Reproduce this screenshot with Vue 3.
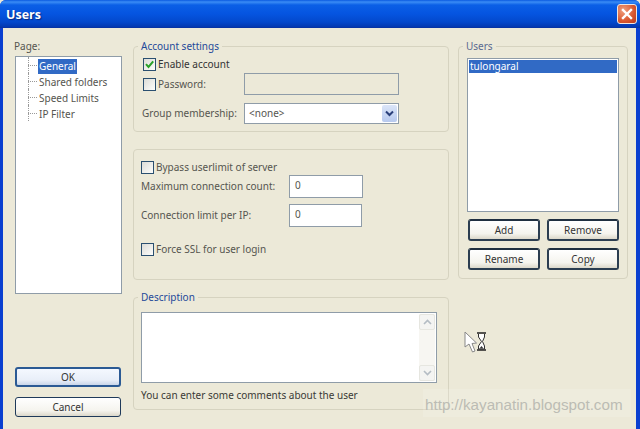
<script setup>
const pages = ['General', 'Shared folders', 'Speed Limits', 'IP Filter']
</script>

<template>
  <div class="window">
    <header class="titlebar">
      <span class="title">Users</span>
      <button class="close" aria-label="Close">
        <svg width="12" height="12" viewBox="0 0 12 12"><path d="M2 2 L10 10 M10 2 L2 10" stroke="#fff" stroke-width="2.4" stroke-linecap="square" fill="none"/></svg>
      </button>
    </header>
    <main class="client">
      <section class="col-page">
        <div class="page-label">Page:</div>
        <ul class="tree">
          <li v-for="(p, i) in pages" :key="p" class="node">
            <span class="node-text" :class="{ active: i === 0 }">{{ p }}</span>
          </li>
        </ul>
        <button class="btn default">OK</button>
        <button class="btn cancel">Cancel</button>
      </section>

      <section class="col-main">
        <fieldset class="group account">
          <legend>Account settings</legend>
          <label class="check-row first">
            <span class="check">
              <svg width="11" height="11" viewBox="0 0 11 11"><path d="M2 5.2 L4.5 8 L9.2 2.4" stroke="#2aa12a" stroke-width="2" fill="none"/></svg>
            </span>
            <span class="dark">Enable account</span>
          </label>
          <div class="row pw">
            <label class="check-row pw-label"><span class="check"></span><span>Password:</span></label>
            <div class="input disabled"></div>
          </div>
          <div class="row gm">
            <span class="gm-label">Group membership:</span>
            <div class="select">
              <span class="select-value">&lt;none&gt;</span>
              <span class="select-arrow">
                <svg width="9" height="7" viewBox="0 0 9 7"><path d="M1 1.5 L4.5 5 L8 1.5" stroke="#2a3f7a" stroke-width="2" fill="none"/></svg>
              </span>
            </div>
          </div>
        </fieldset>

        <fieldset class="group limits">
          <label class="check-row"><span class="check"></span><span>Bypass userlimit of server</span></label>
          <div class="row max">
            <span class="limit-label">Maximum connection count:</span>
            <div class="input num">0</div>
          </div>
          <div class="row ip">
            <span class="limit-label">Connection limit per IP:</span>
            <div class="input num narrow">0</div>
          </div>
          <label class="check-row ssl"><span class="check"></span><span>Force SSL for user login</span></label>
        </fieldset>

        <fieldset class="group desc">
          <legend>Description</legend>
          <div class="textarea">
            <div class="scrollbar">
              <span class="sb-btn"><svg width="9" height="6" viewBox="0 0 9 6"><path d="M1 5 L4.5 1.5 L8 5" stroke="#b4bcc4" stroke-width="1.6" fill="none"/></svg></span>
              <span class="sb-btn"><svg width="9" height="6" viewBox="0 0 9 6"><path d="M1 1 L4.5 4.5 L8 1" stroke="#b4bcc4" stroke-width="1.6" fill="none"/></svg></span>
            </div>
          </div>
          <p class="hint">You can enter some comments about the user</p>
        </fieldset>
      </section>

      <section class="col-users">
        <fieldset class="group users">
          <legend class="muted">Users</legend>
          <div class="listbox"><div class="list-item">tulongaral</div></div>
          <div class="user-buttons">
            <button class="btn dark-edge">Add</button>
            <button class="btn dark-edge">Remove</button>
            <button class="btn dark-edge">Rename</button>
            <button class="btn dark-edge">Copy</button>
          </div>
        </fieldset>
      </section>
    </main>

    <svg class="cursor" width="24" height="24" viewBox="0 0 24 24">
      <path d="M1 1 L1 16 L5 13 L8.5 21 L11 20 L8 12.5 L12.5 12 Z" fill="#fff" stroke="#888" stroke-width="1"/>
      <path d="M13 2 H22 M13 19 H22" stroke="#222" stroke-width="1.6" fill="none"/>
      <path d="M14.5 3 V6 L17.5 10.5 L14.5 15 V18 H20.5 V15 L18.5 10.5 L20.5 6 V3" fill="#fff" stroke="#333" stroke-width="1"/>
      <path d="M15.5 17.5 L17.5 15 L19.5 17.5 Z" fill="#333"/>
    </svg>
    <div class="watermark">http://kayanatin.blogspot.com</div>
  </div>
</template>

<style scoped>
.window {
  position: relative;
  width: 640px;
  height: 429px;
  overflow: hidden;
  display: flex;
  flex-direction: column;
  background: #0a3fd0;
  border-radius: 6px 6px 0 0;
  font-family: "Noto Sans", "Open Sans", sans-serif;
  font-size: 10px;
  line-height: 13px;
  color: #55554f;
}
.titlebar {
  height: 28px;
  flex: none;
  display: flex;
  align-items: center;
  justify-content: space-between;
  padding: 0 3px 0 6px;
  box-sizing: border-box;
  background: linear-gradient(180deg, #0a5ae0 0, #3a8cf5 2px, #0a5fe6 5px, #0554e0 14px, #0348cc 22px, #0338b0 27px, #0a2f9a 28px);
}
.title {
  color: #fff;
  font-family: "Open Sans", sans-serif;
  font-weight: 700;
  font-size: 12.5px;
  text-shadow: 1px 1px 1px #0a2a80;
}
.close {
  width: 20px;
  height: 20px;
  padding: 0;
  display: flex;
  align-items: center;
  justify-content: center;
  border: 1px solid #f0e6e0;
  border-radius: 3px;
  background: radial-gradient(circle at 30% 30%, #f0a080, #d9562e 60%, #b83a1c);
}
.client {
  flex: 1;
  margin: 0 4px 0 3px;
  background: #ece9d8;
  display: grid;
  grid-template-columns: 109px 316px 170px;
  grid-template-areas: "a b c";
  column-gap: 0;
  padding: 12px 0 0 11px;
  box-sizing: border-box;
  align-items: start;
}
.col-page, .col-main, .col-users {
  display: flex;
  flex-direction: column;
}
.col-main {
  margin-left: 10px;
  width: 316px;
}
.col-users {
  margin-left: 19px;
  width: 170px;
}
.page-label {
  height: 16px;
}
.tree {
  list-style: none;
  margin: 0 0 0 1px;
  padding: 1px 0 0 22px;
  width: 107px;
  height: 238px;
  box-sizing: border-box;
  background: #fff;
  border: 1px solid #8f9ca8;
}
.node {
  position: relative;
  height: 16px;
  display: flex;
  align-items: center;
}
.node::before {
  content: "";
  position: absolute;
  left: -10px;
  top: 7px;
  width: 9px;
  border-top: 1px dotted #999;
}
.node::after {
  content: "";
  position: absolute;
  left: -10px;
  top: -1px;
  height: 16px;
  border-left: 1px dotted #999;
}
.node-text {
  padding: 1px;
}
.node-text.active {
  background: #316ac5;
  color: #fff;
}
.btn {
  font: inherit;
  padding: 0;
  color: #333;
  border-radius: 3px;
  background: linear-gradient(180deg, #ffffff, #f5f4ee 70%, #dcd8ca);
  border: 1px solid #1f3a5a;
}
.btn.default {
  width: 106px;
  height: 20px;
  margin: 73px 0 0 1px;
  border: 2px solid #2b5a94;
  background: linear-gradient(180deg, #f4f8ff, #e8eef8 70%, #c9d6ea);
}
.btn.cancel {
  width: 106px;
  height: 20px;
  margin: 10px 0 0 1px;
}
.group {
  margin: 0;
  min-width: 0;
  box-sizing: border-box;
  border: 1px solid #d6d3c0;
  border-radius: 4px;
  padding: 0 7px;
}
legend {
  padding: 0 3px;
  margin-left: -3px;
  color: #1f4a9a;
  line-height: 13px;
}
legend.muted {
  color: #5a6a90;
}
.account {
  height: 92px;
  padding-top: 5px;
}
.limits {
  height: 131px;
  margin-top: 17px;
  padding-top: 11px;
}
.desc {
  height: 119px;
  margin-top: 11px;
  padding-top: 8px;
}
.users {
  height: 239px;
  padding-top: 5px;
}
.check-row {
  display: flex;
  align-items: center;
  gap: 2px;
  height: 13px;
}
.check-row.first {
  margin-left: 2px;
}
.dark {
  color: #333;
}
.check {
  width: 13px;
  height: 13px;
  flex: none;
  box-sizing: border-box;
  border: 1px solid #2a4f70;
  background: linear-gradient(135deg, #dcdcd7, #fdfdfb);
  display: flex;
  align-items: center;
  justify-content: center;
}
.row {
  display: flex;
  align-items: center;
}
.pw {
  margin-top: 2px;
  height: 22px;
}
.pw-label {
  width: 101px;
  margin-left: 2px;
  flex: none;
}
.gm {
  margin-top: 8px;
  height: 21px;
}
.gm-label {
  width: 102px;
  margin-left: 1px;
  flex: none;
}
.input {
  box-sizing: border-box;
  border: 1px solid #8f9ca8;
  background: #fff;
}
.input.disabled {
  width: 155px;
  height: 22px;
  background: #ece9d8;
}
.select {
  width: 155px;
  height: 21px;
  box-sizing: border-box;
  border: 1px solid #8f9ca8;
  background: #fff;
  display: flex;
  align-items: center;
  justify-content: space-between;
  padding-left: 4px;
}
.select-arrow {
  width: 15px;
  height: 17px;
  margin-right: 1px;
  background: linear-gradient(180deg, #dbe5f8, #b7c9ee);
  border-radius: 2px;
  display: flex;
  align-items: center;
  justify-content: center;
}
.max {
  margin-top: 1px;
  height: 23px;
}
.ip {
  margin-top: 6px;
  height: 23px;
}
.limit-label {
  width: 148px;
  flex: none;
}
.num {
  width: 74px;
  height: 23px;
  padding: 3px 0 0 5px;
}
.num.narrow {
  width: 73px;
}
.ssl {
  margin-top: 16px;
}
.textarea {
  width: 296px;
  height: 71px;
  box-sizing: border-box;
  border: 1px solid #8f9ca8;
  background: #fff;
  display: flex;
  justify-content: flex-end;
  padding: 1px;
}
.scrollbar {
  width: 16px;
  display: flex;
  flex-direction: column;
  justify-content: space-between;
  background: #f7f6f2;
}
.sb-btn {
  height: 16px;
  box-sizing: border-box;
  border: 1px solid #e6e6e0;
  border-radius: 2px;
  background: #f4f4f2;
  display: flex;
  align-items: center;
  justify-content: center;
}
.hint {
  margin: 6px 0 0;
  color: #3a3a36;
}
.listbox {
  width: 152px;
  height: 154px;
  margin-left: 1px;
  box-sizing: border-box;
  border: 1px solid #8f9ca8;
  background: #fff;
  padding: 1px;
}
.list-item {
  background: #316ac5;
  color: #fff;
  padding-left: 1px;
  height: 13px;
}
.user-buttons {
  display: grid;
  grid-template-columns: 72px 72px;
  column-gap: 7px;
  row-gap: 7px;
  margin: 7px 0 0 2px;
}
.user-buttons .btn {
  height: 22px;
  padding-top: 1px;
  border: 2px solid #2b3d50;
  border-top-color: #1f2f40;
  border-radius: 3px;
}
.cursor {
  position: absolute;
  left: 464px;
  top: 331px;
}
.watermark {
  position: absolute;
  left: 423px;
  top: 389px;
  width: 208px;
  height: 28px;
  box-sizing: border-box;
  padding-left: 2px;
  background: rgba(255, 255, 255, 0.15);
  font-family: "Liberation Sans", sans-serif;
  font-size: 15.2px;
  line-height: 32px;
  color: #bcbcb4;
}
</style>

<style>
html, body { margin: 0; background: #ece9d8; }
</style>
